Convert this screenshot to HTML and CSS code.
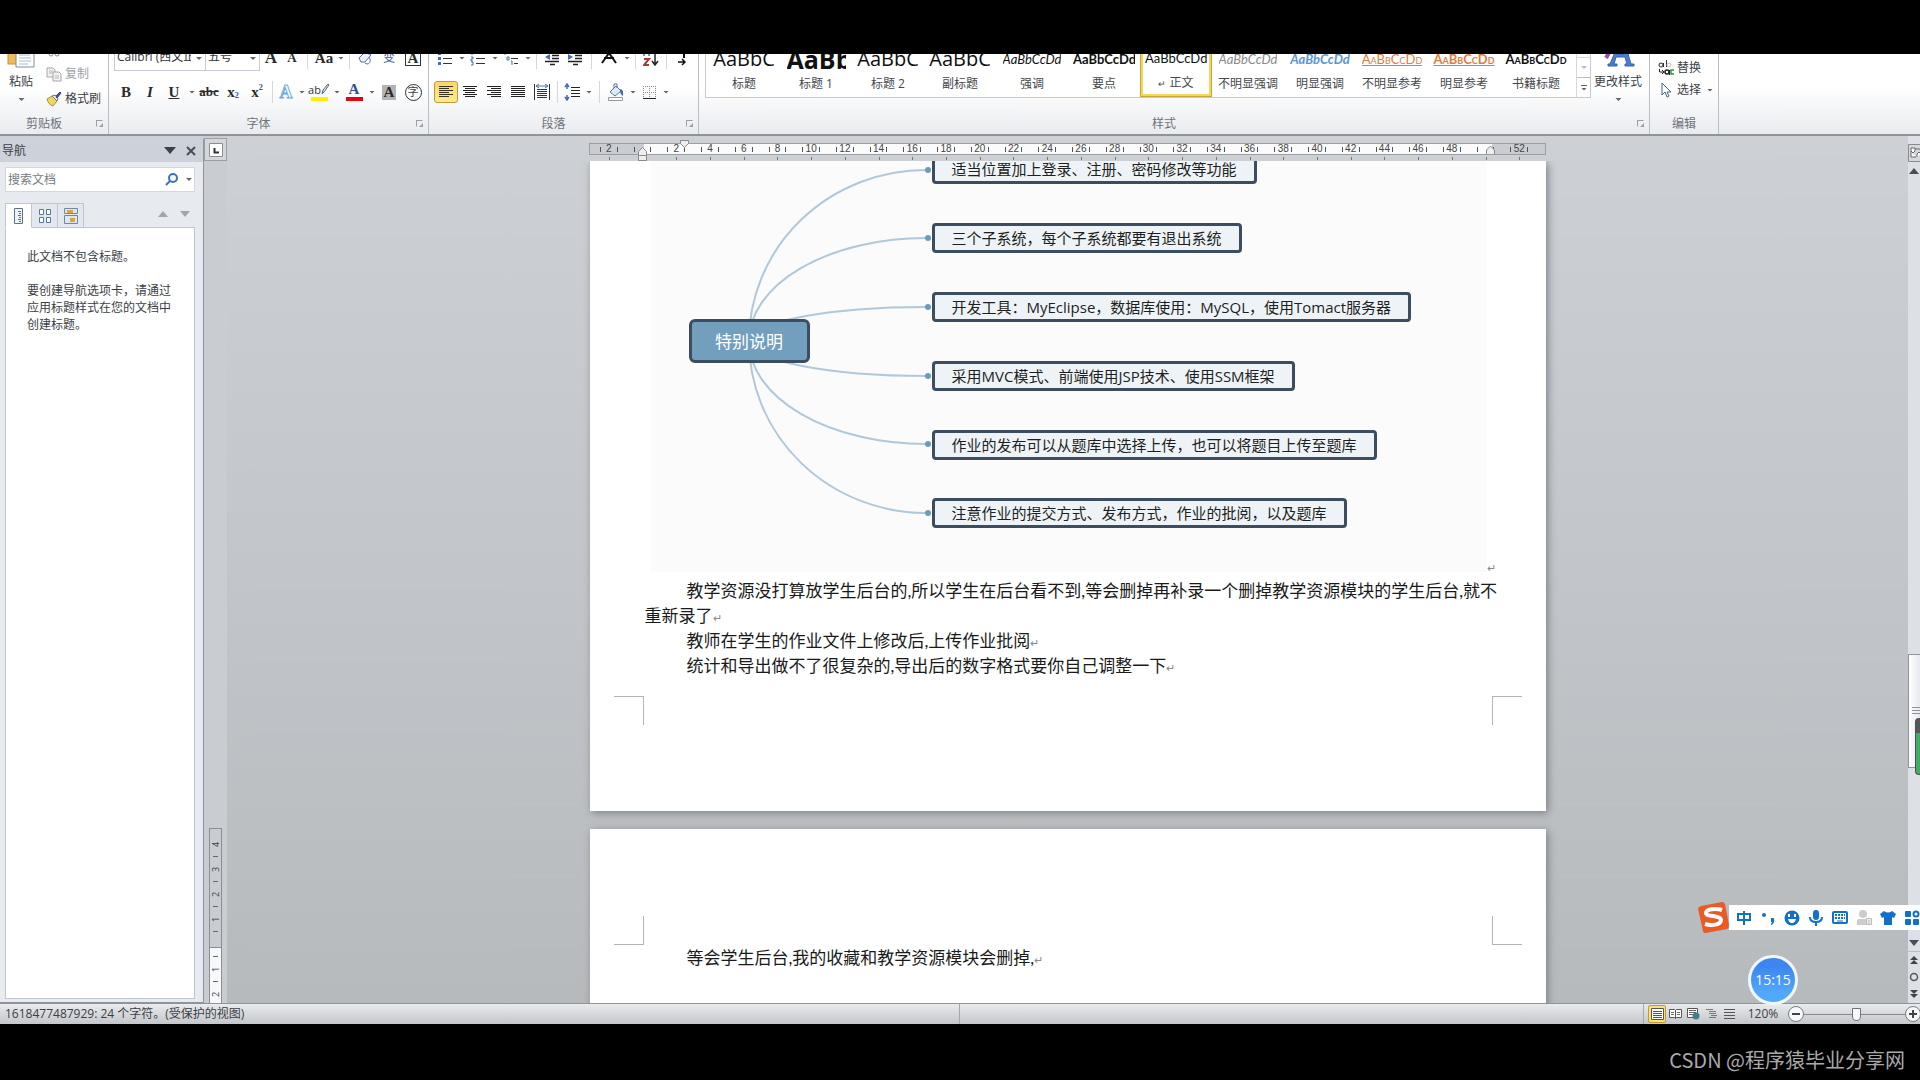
FILE: index.html
```html
<!DOCTYPE html>
<html lang="zh-CN">
<head>
    <meta charset="UTF-8">
    <title>文档</title>
    <link rel="stylesheet" href="styles.css">
</head>
<body>
    <div class="window">
        <header class="ribbon">
            <section class="group group-clipboard">
                <div class="group-body">
                    <button class="big-button">
                        <svg width="28" height="32" viewBox="0 0 28 32"><rect x="1" y="2" width="19" height="26" fill="#f0b95a" stroke="#c98f35"/><path d="M9 9h11l7 7v15H9z" fill="#fff" stroke="#7d8ba3"/><path d="M12 16h11M12 19h11M12 22h12M12 25h12M12 28h9" stroke="#a9bcd6"/></svg>
                        <span>粘贴</span>
                        <i class="caret"></i>
                    </button>
                    <div class="stack">
                        <button class="row-button" aria-label="剪切"><svg width="16" height="16" viewBox="0 0 16 16"><path d="M4 2l6 10M12 2L6 12" stroke="#888" fill="none"/><circle cx="5" cy="13" r="2" fill="none" stroke="#888"/><circle cx="11" cy="13" r="2" fill="none" stroke="#888"/></svg></button>
                        <button class="row-button muted"><svg width="16" height="16" viewBox="0 0 16 16"><path d="M1 2h6l2 2v7H1z" fill="#f3f3f3" stroke="#a5a5a5"/><path d="M7 6h6l2 2v7H7z" fill="#f3f3f3" stroke="#a5a5a5"/><path d="M3 5h4M3 7h3M9 10h4M9 12h4" stroke="#b5b5b5"/></svg><span>复制</span></button>
                        <button class="row-button"><svg width="16" height="16" viewBox="0 0 16 16"><path d="M1 8l5-3 5 5-4 5c-3-1-5-3-6-7z" fill="#efd65f" stroke="#a8923a"/><path d="M6 5l3-1 3 3-1 3z" fill="#e8e8f4" stroke="#777"/><path d="M10 5l4-4 1 1-4 5z" fill="#4a56a8" stroke="#34408c"/></svg><span>格式刷</span></button>
                    </div>
                </div>
                <div class="group-label">剪贴板<button class="launcher" aria-label="剪贴板选项"></button></div>
            </section>

            <section class="group group-font">
                <div class="group-body tool-rows">
                    <div class="tools">
                        <span class="combo combo-font"><select aria-label="字体"><option>Calibri (西文正文)</option></select><i class="caret"></i></span>
                        <span class="combo combo-size"><select aria-label="字号"><option>五号</option></select><i class="caret"></i></span>
                        <button class="tool mid serif grow">A</button>
                        <button class="tool narrow serif">A</button>
                        <i class="sep wide"></i>
                        <button class="tool mid serif">Aa</button><i class="caret"></i>
                        <i class="sep"></i>
                        <button class="tool"><svg width="18" height="18" viewBox="0 0 18 18"><path d="M3 9l6-6 6 3-6 7H5z" fill="#eef" stroke="#5a6eb0"/><path d="M9 14c4 3 7-2 4-6" fill="none" stroke="#5a6eb0"/></svg></button>
                        <button class="tool blue">变</button>
                        <button class="tool serif"><span class="boxed">A</span></button>
                    </div>
                    <div class="tools">
                        <button class="tool serif">B</button>
                        <button class="tool serif italic">I</button>
                        <button class="tool serif under">U</button><i class="caret"></i>
                        <button class="tool serif strike">abc</button>
                        <button class="tool serif">x<sub>2</sub></button>
                        <button class="tool serif">x<sup>2</sup></button>
                        <i class="sep"></i>
                        <button class="tool narrow serif glow">A</button><i class="caret"></i>
                        <button class="tool"><span class="swatch yellow">ab<svg width="9" height="12" viewBox="0 0 9 12"><path d="M1 11l1-4 5-6 1 1-5 7z" fill="#dfe8f5" stroke="#567"/></svg></span></button><i class="caret"></i>
                        <button class="tool serif"><span class="swatch red">A</span></button><i class="caret"></i>
                        <button class="tool serif"><span class="shaded">A</span></button>
                        <button class="tool"><span class="ring">字</span></button>
                    </div>
                </div>
                <div class="group-label">字体<button class="launcher" aria-label="字体选项"></button></div>
            </section>

            <section class="group group-paragraph">
                <div class="group-body tool-rows">
                    <div class="tools">
                        <button class="tool mid"><svg width="16" height="16" viewBox="0 0 16 16"><path d="M1 2h3v3H1zM1 7h3v3H1zM1 12h3v3H1z" fill="#4a6cb3"/><path d="M6 3.500h9M6 8.500h9M6 13.500h9" stroke="#333"/></svg></button><i class="caret"></i>
                        <button class="tool mid"><svg width="16" height="16" viewBox="0 0 16 16"><path d="M2 1v4M1 7h2v2H1v2h2M1 12h2v3H1" fill="none" stroke="#4a6cb3"/><path d="M6 3.500h9M6 8.500h9M6 13.500h9" stroke="#333"/></svg></button><i class="caret"></i>
                        <button class="tool mid"><svg width="16" height="16" viewBox="0 0 16 16"><path d="M1 2h2v2H1zM4 7h2v3H4zM8 11h1v4" fill="none" stroke="#4a6cb3"/><path d="M5 3.500h7M8 8.500h7M11 13.500h4" stroke="#333"/></svg></button><i class="caret"></i>
                        <i class="sep"></i>
                        <button class="tool"><svg width="16" height="16" viewBox="0 0 16 16"><path d="M1 2.500h14M8 5.500h7M8 8.500h7M1 11.500h14M6 14.500h5" stroke="#222" stroke-width="1.500"/><path d="M6 4v6L1 7z" fill="#4a6cb3"/></svg></button>
                        <button class="tool mid"><svg width="16" height="16" viewBox="0 0 16 16"><path d="M1 2.500h14M8 5.500h7M8 8.500h7M1 11.500h14M6 14.500h5" stroke="#222" stroke-width="1.500"/><path d="M1 4v6l5-3z" fill="#4a6cb3"/></svg></button>
                        <i class="sep wide"></i>
                        <button class="tool"><svg width="18" height="16" viewBox="0 0 18 16"><path d="M9 3l7 10M9 3L2 13M4 8h10" fill="none" stroke="#111" stroke-width="2"/></svg></button><i class="caret"></i>
                        <i class="sep"></i>
                        <button class="tool"><svg width="16" height="18" viewBox="0 0 16 18"><path d="M1 7V1h5v6M1 4h5" fill="none" stroke="#4a6cb3" stroke-width="1.500"/><path d="M1 10h5l-5 6h5" fill="none" stroke="#a23b3b" stroke-width="2"/><path d="M12 1v14M9 12l3 4 3-4" fill="none" stroke="#222" stroke-width="1.500"/></svg></button>
                        <i class="sep"></i>
                        <button class="tool"><svg width="14" height="18" viewBox="0 0 14 18"><path d="M5 2h6M9 2v7" stroke="#111" stroke-width="2"/><path d="M3 13h6M7 10l3 3-3 3" fill="none" stroke="#111" stroke-width="1.500"/></svg></button>
                    </div>
                    <div class="tools">
                        <button class="tool pressed"><svg width="16" height="14" viewBox="0 0 16 14"><path d="M1 1.500h14M1 3.500h10M1 5.500h14M1 7.500h10M1 9.500h14M1 11.500h10" stroke="#3a3420"/></svg></button>
                        <button class="tool"><svg width="16" height="14" viewBox="0 0 16 14"><path d="M1 1.500h14M3 3.500h10M1 5.500h14M3 7.500h10M1 9.500h14M3 11.500h10" stroke="#222"/></svg></button>
                        <button class="tool"><svg width="16" height="14" viewBox="0 0 16 14"><path d="M1 1.500h14M5 3.500h10M1 5.500h14M5 7.500h10M1 9.500h14M5 11.500h10" stroke="#222"/></svg></button>
                        <button class="tool"><svg width="16" height="14" viewBox="0 0 16 14"><path d="M1 1.500h14M1 3.500h14M1 5.500h14M1 7.500h14M1 9.500h14M1 11.500h14" stroke="#222"/></svg></button>
                        <button class="tool"><svg width="16" height="18" viewBox="0 0 16 18"><path d="M.5 1v16M15.500 1v16M3 6.500h10M3 8.500h10M3 10.500h10M3 12.500h10M3 14.500h10" stroke="#333"/><path d="M2 3h12M5 1L2 3l3 2M11 1l3 2-3 2" fill="none" stroke="#4a6cb3"/></svg></button>
                        <i class="sep"></i>
                        <button class="tool mid"><svg width="16" height="18" viewBox="0 0 16 18"><path d="M3 1v5M3 12v5M1 4l2-3 2 3M1 14l2 3 2-3" fill="none" stroke="#4a6cb3" stroke-width="1.500"/><path d="M7 4.500h9M7 7.500h9M7 10.500h9M7 13.500h9" stroke="#222"/></svg></button><i class="caret"></i>
                        <i class="sep wide"></i>
                        <button class="tool mid"><svg width="18" height="18" viewBox="0 0 18 18"><path d="M3 9l6-6 5 5-6 5z" fill="#dfe9f6" stroke="#5676a8"/><path d="M7 5V1h3v4" fill="none" stroke="#5676a8"/><path d="M13 6c4 1 3 4 3 7-2-1-3-3-3-7z" fill="#3d68b0"/><path d="M1.500 14.500h14v3h-14z" fill="#fff" stroke="#999"/></svg></button><i class="caret"></i>
                        <button class="tool mid"><svg width="15" height="15" viewBox="0 0 15 15"><path d="M1.500 1v12M7.500 1v12M13.500 1v12M1 1.500h13M1 7.500h13" stroke="#888" stroke-dasharray="1 1"/><path d="M1 13.500h13" stroke="#222"/></svg></button><i class="caret"></i>
                    </div>
                </div>
                <div class="group-label">段落<button class="launcher" aria-label="段落选项"></button></div>
            </section>

            <section class="group group-styles">
                <div class="group-body">
                    <div class="gallery">
                        <button class="style"><span class="sample large">AaBbC</span><span>标题</span></button>
                        <button class="style"><span class="sample heavy">AaBb</span><span>标题 1</span></button>
                        <button class="style"><span class="sample large">AaBbC</span><span>标题 2</span></button>
                        <button class="style"><span class="sample large">AaBbC</span><span>副标题</span></button>
                        <button class="style"><span class="sample italic">AaBbCcDd</span><span>强调</span></button>
                        <button class="style"><span class="sample bold">AaBbCcDd</span><span>要点</span></button>
                        <button class="style selected"><span class="sample">AaBbCcDd</span><span><small>↵</small> 正文</span></button>
                        <button class="style"><span class="sample italic gray">AaBbCcDd</span><span>不明显强调</span></button>
                        <button class="style"><span class="sample italic bold sky">AaBbCcDd</span><span>明显强调</span></button>
                        <button class="style"><span class="sample caps orange">AaBbCcDd</span><span>不明显参考</span></button>
                        <button class="style"><span class="sample caps bold orange">AaBbCcDd</span><span>明显参考</span></button>
                        <button class="style"><span class="sample caps bold">AaBbCcDd</span><span>书籍标题</span></button>
                        <div class="gallery-scroll">
                            <button aria-label="下一行"><i class="caret pale"></i></button>
                            <button class="more" aria-label="其他"><i class="caret"></i></button>
                        </div>
                    </div>
                    <button class="big-button">
                        <svg width="34" height="32" viewBox="0 0 34 32"><path d="M5 22L14 6" stroke="#9b4fb5" stroke-width="4"/><path d="M9 28l10-24h4l7 24h3v2h-9v-2h2l-2-7h-9l-2 7h3v2H7v-2zM16 18h7l-3-9z" fill="#4a7fd0" stroke="#3562ab"/></svg>
                        <span>更改样式</span>
                        <i class="caret"></i>
                    </button>
                </div>
                <div class="group-label">样式<button class="launcher" aria-label="样式选项"></button></div>
            </section>

            <section class="group group-edit">
                <div class="group-body stack">
                    <button class="row-button"><svg width="16" height="16" viewBox="0 0 16 16"><circle cx="3" cy="5" r="2" fill="none" stroke="#222"/><path d="M5.500 3v4M8.500 0v7" stroke="#333"/><circle cx="11" cy="5" r="2" fill="none" stroke="#bbb"/><path d="M1.500 9v3h4M4 10l2 2-2 2" fill="none" stroke="#222"/><circle cx="9" cy="12" r="2" fill="none" stroke="#222" stroke-width="1.500"/><path d="M11.500 10v5" stroke="#222"/><path d="M16 10h-3v4h3" fill="none" stroke="#2a9a3a" stroke-width="1.500"/></svg><span>替换</span></button>
                    <button class="row-button"><svg width="16" height="16" viewBox="0 0 16 16"><path d="M4 1v12l3-3 2 5 2-1-2-4h4z" fill="#fff" stroke="#4a6285"/></svg><span>选择</span><i class="caret"></i></button>
                </div>
                <div class="group-label">编辑</div>
            </section>
        </header>

        <main class="workspace">
            <aside class="nav">
                <div class="nav-header">
                    <span>导航</span>
                    <button aria-label="窗格选项"><svg width="12" height="7" viewBox="0 0 12 7"><path d="M0 0h12L6 7z" fill="#3c4048"/></svg></button>
                    <button aria-label="关闭"><svg width="10" height="10" viewBox="0 0 10 10"><path d="M1 1l8 8M9 1L1 9" stroke="#4a4e56" stroke-width="2"/></svg></button>
                </div>
                <div class="search">
                    <input type="text" placeholder="搜索文档" aria-label="搜索文档">
                    <svg width="13" height="13" viewBox="0 0 13 13"><circle cx="8" cy="5" r="4" fill="#f2f8ff" stroke="#3f73b5" stroke-width="2"/><path d="M5 8l-4 4" stroke="#3f73b5" stroke-width="2"/></svg>
                    <i class="caret"></i>
                </div>
                <div class="nav-tabs">
                    <button class="active" aria-label="标题"><svg width="10" height="16" viewBox="0 0 10 16"><path d="M.5.500h8v15h-8z" fill="#eef3f8" stroke="#5f7388"/><path d="M4 3.500h3M5 5.500h2M4 7.500h3M5 9.500h2M4 11.500h3M5 13.500h2" stroke="#5f7388"/></svg></button>
                    <button aria-label="页面"><svg width="14" height="16" viewBox="0 0 14 16"><path d="M1.500 1.500h4v5h-4zM8.500 1.500h4v5h-4zM1.500 9.500h4v5h-4zM8.500 9.500h4v5h-4z" fill="#fff" stroke="#55779c"/></svg></button>
                    <button aria-label="结果"><svg width="14" height="16" viewBox="0 0 14 16"><path d="M.5.500h13v5H.5zM.5 7.500h13v8H.5z" fill="#dce7f3" stroke="#6c88a8"/><path d="M3 2h6v3H3zM6 10h5v4H6z" fill="#dfa533"/></svg></button>
                    <span class="nav-arrows"><i class="tri up"></i><i class="tri"></i></span>
                </div>
                <div class="nav-content">
                    <p>此文档不包含标题。</p>
                    <p>要创建导航选项卡，请通过应用标题样式在您的文档中创建标题。</p>
                </div>
            </aside>

            <div class="side-ruler">
                <button class="tab-stop" aria-label="制表符"><svg width="14" height="14" viewBox="0 0 14 14"><path d="M.5.500h13v13H.5z" fill="#fff" stroke="#8a8d92"/><path d="M5.500 5v4.500H10" fill="none" stroke="#333" stroke-width="2"/></svg></button>
                <div class="v-ruler">
                    <span>4</span><span>3</span><span>2</span><span>1</span><span></span><span>1</span><span>2</span>
                </div>
            </div>

            <div class="document">
                <div class="ruler-row">
                    <div class="h-ruler">
                        <span>2</span><span class="blank"></span><span>2</span><span>4</span><span>6</span><span>8</span><span>10</span><span>12</span><span>14</span><span>16</span><span>18</span><span>20</span><span>22</span><span>24</span><span>26</span><span>28</span><span>30</span><span>32</span><span>34</span><span>36</span><span>38</span><span>40</span><span>42</span><span>44</span><span>46</span><span>48</span><span class="blank"></span><span>52</span>
                        <svg class="marker first-line" width="10" height="9" viewBox="0 0 10 9"><path d="M.5.500h8v3l-4 4-4-4z" fill="#eee" stroke="#8a8a8a"/></svg>
                        <svg class="marker left-indent" width="10" height="14" viewBox="0 0 10 14"><path d="M.5 8.500v-4l4-4 4 4v4zM.5 8.500h8v5h-8z" fill="#eee" stroke="#8a8a8a"/></svg>
                        <svg class="marker right-indent" width="10" height="10" viewBox="0 0 10 10"><path d="M.5 9v-4l4-4 4 4v4" fill="#eee" stroke="#8a8a8a"/></svg>
                    </div>
                </div>
                <div class="pages">
                    <article class="page page-one">
                        <div class="mindmap">
                            <svg class="links" width="836" height="408" viewBox="650 161 836 408">
                                <g fill="none" stroke="#b0c8d8" stroke-width="2">
                                    <path d="M748 341A177 171 0 0 1 925 170"/>
                                    <path d="M748 341A177 103 0 0 1 925 238"/>
                                    <path d="M748 341A177 34 0 0 1 925 307"/>
                                    <path d="M748 341A177 35 0 0 0 925 376"/>
                                    <path d="M748 341A177 103 0 0 0 925 444"/>
                                    <path d="M748 341A177 172 0 0 0 925 513"/>
                                </g>
                                <g fill="#6c9cbb">
                                    <circle cx="927" cy="170" r="3"/><circle cx="927" cy="238" r="3"/><circle cx="927" cy="307" r="3"/>
                                    <circle cx="927" cy="376" r="3"/><circle cx="927" cy="444" r="3"/><circle cx="927" cy="513" r="3"/>
                                </g>
                            </svg>
                            <div class="node root">特别说明</div>
                            <div class="node n1">适当位置加上登录、注册、密码修改等功能</div>
                            <div class="node n2">三个子系统，每个子系统都要有退出系统</div>
                            <div class="node n3">开发工具：MyEclipse，数据库使用：MySQL，使用Tomact服务器</div>
                            <div class="node n4">采用MVC模式、前端使用JSP技术、使用SSM框架</div>
                            <div class="node n5">作业的发布可以从题库中选择上传，也可以将题目上传至题库</div>
                            <div class="node n6">注意作业的提交方式、发布方式，作业的批阅，以及题库</div>
                            <span class="mark image-mark">↵</span>
                        </div>
                        <div class="text">
                            <p>教学资源没打算放学生后台的,所以学生在后台看不到,等会删掉再补录一个删掉教学资源模块的学生后台,就不<br>重新录了<span class="mark">↵</span></p>
                            <p>教师在学生的作业文件上修改后,上传作业批阅<span class="mark">↵</span></p>
                            <p>统计和导出做不了很复杂的,导出后的数字格式要你自己调整一下<span class="mark">↵</span></p>
                        </div>
                        <div class="corners bottom"><i></i><i></i></div>
                    </article>
                    <article class="page page-two">
                        <div class="corners top"><i></i><i></i></div>
                        <div class="text">
                            <p>等会学生后台,我的收藏和教学资源模块会删掉,<span class="mark">↵</span></p>
                        </div>
                    </article>
                </div>
            </div>

            <div class="scrollbar">
                <svg class="ruler-toggle" width="13" height="18" viewBox="0 0 13 18"><path d="M14 .5H.5v17H14" fill="#d5d8dc" stroke="#888c92"/><path d="M3 4h4v3L5 9 3 7zM7 5h6M9 13v-3l2-2 2 2M3 7v6h5" fill="#fff" stroke="#666"/></svg>
                <i class="tri up dark"></i>
                <div class="thumb"><i class="grip"></i></div>
                <i class="tri dark"></i>
                <div class="browse">
                    <svg width="10" height="10" viewBox="0 0 10 10"><path d="M1 5l4-4 4 4zM1 9l4-4 4 4z" fill="#444"/></svg>
                    <svg width="10" height="10" viewBox="0 0 10 10"><circle cx="5" cy="5" r="3.500" fill="none" stroke="#555" stroke-width="1.500"/></svg>
                    <svg width="10" height="10" viewBox="0 0 10 10"><path d="M1 1l4 4 4-4zM1 5l4 4 4-4z" fill="#444"/></svg>
                </div>
                <div class="meter"></div>
            </div>
        </main>

        <footer class="status">
            <span class="status-left">1618477487929: 24 个字符。(受保护的视图)</span>
            <div class="status-right">
                <button class="view active" aria-label="页面视图"><svg width="13" height="12" viewBox="0 0 13 12"><path d="M.5.500h12v11H.5z" fill="#fff" stroke="#555"/><path d="M2 3.500h9M2 5.500h9M2 7.500h9M2 9.500h9" stroke="#555"/></svg></button>
                <button class="view" aria-label="阅读版式"><svg width="13" height="12" viewBox="0 0 13 12"><path d="M.5 1.500h5l1 1 1-1h5v8h-5l-1 1-1-1h-5zM6.500 2v9" fill="#fff" stroke="#555"/><path d="M2 4.500h3M2 6.500h3M8 4.500h3M8 6.500h3" stroke="#666"/></svg></button>
                <button class="view" aria-label="Web 版式"><svg width="13" height="12" viewBox="0 0 13 12"><path d="M.5.500h10v9H.5z" fill="#fff" stroke="#555"/><path d="M2 2.500h7M2 4.500h7M2 6.500h4" stroke="#666"/><circle cx="9" cy="8" r="3.500" fill="#447d8f"/></svg></button>
                <button class="view" aria-label="大纲"><svg width="13" height="12" viewBox="0 0 13 12"><path d="M1 1.500h7M4 3.500h7M4 5.500h7M6 7.500h6M4 9.500h7" stroke="#777"/></svg></button>
                <button class="view" aria-label="草稿"><svg width="13" height="12" viewBox="0 0 13 12"><path d="M1 1.500h11M1 4.500h11M1 7.500h11M1 10.500h11" stroke="#555"/></svg></button>
                <button class="zoom-label">120%</button>
                <button class="zoom-button" aria-label="缩小"><svg width="16" height="16" viewBox="0 0 16 16"><circle cx="8" cy="8" r="7.500" fill="#f7f8f9" stroke="#777b80"/><path d="M4 8h8" stroke="#444" stroke-width="2"/></svg></button>
                <input class="zoom-slider" type="range" min="0" max="100" value="52" aria-label="显示比例">
                <button class="zoom-button" aria-label="放大"><svg width="16" height="16" viewBox="0 0 16 16"><circle cx="8" cy="8" r="7.500" fill="#f7f8f9" stroke="#777b80"/><path d="M4 8h8M8 4v8" stroke="#444" stroke-width="2"/></svg></button>
            </div>
        </footer>
    </div>

    <div class="credit">CSDN @程序猿毕业分享网</div>

    <!-- 输入法工具条 -->
    <div class="ime">
        <svg class="ime-logo" width="34" height="34" viewBox="0 0 34 34"><path d="M4 5L25 1q2 0 3 2l4 21q0 3-2 4L9 32q-3 0-3-2L1 8q0-2 3-3z" fill="#ea5a25"/><path d="M25 9C19 7 9 8 9 12c0 4 15 2 15 7 0 5-10 6-16 4" fill="none" stroke="#fff" stroke-width="4"/></svg>
        <svg width="16" height="16" viewBox="0 0 16 16"><path d="M2 4h12v6H2zM8 1v14" fill="none" stroke="#1270c8" stroke-width="2"/></svg>
        <svg width="16" height="16" viewBox="0 0 16 16"><circle cx="4" cy="5" r="2" fill="#1270c8"/><path d="M11 8h3v3q0 3-3 4v-1l1-2h-1z" fill="#1270c8"/></svg>
        <svg width="16" height="16" viewBox="0 0 16 16"><circle cx="8" cy="8" r="7.500" fill="#1270c8"/><path d="M5 4v3M11 4v3" stroke="#fff" stroke-width="2"/><path d="M4 9h8q-1 4-4 4T4 9z" fill="#fff"/></svg>
        <svg width="16" height="16" viewBox="0 0 16 16"><rect x="5" y="0" width="6" height="10" rx="3" fill="#1270c8"/><path d="M2 7q0 5 6 5t6-5M8 12v4" fill="none" stroke="#1270c8" stroke-width="2"/></svg>
        <svg width="16" height="16" viewBox="0 0 16 16"><rect x="1" y="2" width="14" height="11" rx="1" fill="#fff" stroke="#1270c8" stroke-width="2"/><path d="M3 5h10M3 8h10" stroke="#1270c8" stroke-width="2" stroke-dasharray="2 1"/><path d="M5 11h6" stroke="#1270c8"/></svg>
        <svg width="16" height="16" viewBox="0 0 16 16"><circle cx="7" cy="4" r="4" fill="#ccc"/><path d="M1 15V11q0-2 2-2h8v6z" fill="#ccc"/><path d="M10.500 8.500h5v6h-5zM13 10v4" fill="#eee" stroke="#bbb"/></svg>
        <svg width="16" height="16" viewBox="0 0 16 16"><path d="M4 1q4 3 8 0l4 3-2 4-2-1v8H4V7L2 8 0 4z" fill="#1270c8"/></svg>
        <svg width="16" height="16" viewBox="0 0 16 16"><rect x="1" y="1" width="6" height="6" rx="1" fill="#1270c8"/><circle cx="12" cy="4" r="2.500" fill="none" stroke="#1270c8" stroke-width="2"/><rect x="1" y="9" width="6" height="6" rx="1" fill="#1270c8"/><rect x="9" y="9" width="6" height="6" rx="1" fill="#1270c8"/></svg>
    </div>
    <div class="clock">15:15</div>
</body>
</html>
```
FILE: styles.css
```css
* {
    box-sizing: border-box;
}
body {
    margin: 0;
    background: #000;
    font-family: "Open Sans", "Noto Sans CJK SC", sans-serif;
    font-size: 12px;
    line-height: 16px;
    color: #3b3e44;
    overflow: hidden;
}
button {
    margin: 0;
    padding: 0;
    border: none;
    background: none;
    font: inherit;
    color: inherit;
}
svg {
    display: block;
    flex: none;
}
.window {
    display: flex;
    flex-direction: column;
    height: 100vh;
    padding: 54px 0 56px;
}

/* 功能区 */
.ribbon {
    display: flex;
    flex: none;
    height: 82px;
    overflow: hidden;
    background: linear-gradient(#fff 40%, #e9ebef);
    border-bottom: 2px solid #8f949b;
}
.group {
    display: flex;
    flex-direction: column;
    justify-content: flex-end;
    border-right: 1px solid #b9bdc4;
}
.group-clipboard { width: 109px; }
.group-font { width: 320px; }
.group-paragraph { width: 270px; }
.group-styles { width: 951px; }
.group-edit { width: 69px; }
.group-body {
    display: flex;
    align-items: flex-end;
}
.group-label {
    position: relative;
    flex: none;
    height: 23px;
    padding-right: 20px;
    text-align: center;
    line-height: 26px;
    color: #6d727b;
}
.group-edit .group-label {
    padding-right: 0;
}
.launcher {
    position: absolute;
    right: 5px;
    top: 9px;
    width: 7px;
    height: 7px;
    border: 1px solid #9a9ea5;
    border-right-color: transparent;
    border-bottom-color: transparent;
}
.launcher::after {
    content: "";
    position: absolute;
    right: -1px;
    bottom: -1px;
    width: 4px;
    height: 4px;
    background: #9a9ea5;
    clip-path: polygon(100% 0, 100% 100%, 0 100%);
}
.caret {
    flex: none;
    width: 11px;
    height: 3px;
    background: #62666d;
    clip-path: polygon(3px 0, 9px 0, 6px 3px);
}
.caret.pale {
    background: #b5b8bd;
}
.big-button {
    display: flex;
    flex-direction: column;
    align-items: center;
    width: 42px;
    padding-bottom: 10px;
    flex: none;
}
.big-button svg {
    margin-bottom: 6px;
}
.big-button .caret {
    margin-top: 8px;
}
.group-styles .big-button {
    width: 54px;
}
.stack {
    display: flex;
    flex-direction: column;
    align-items: flex-start;
}
.row-button {
    display: flex;
    align-items: center;
    gap: 3px;
    height: 25px;
    padding-left: 4px;
}
.group-edit .row-button {
    height: 22px;
    padding-left: 8px;
}
.group-edit .stack {
    padding-bottom: 10px;
}
.muted {
    color: #9c9fa4;
}

.tool-rows {
    flex-direction: column;
    align-items: flex-start;
    gap: 8px;
    padding: 0 0 6px 5px;
}
.tools {
    display: flex;
    align-items: center;
    height: 26px;
}
.tool {
    display: flex;
    align-items: center;
    justify-content: center;
    width: 24px;
    height: 22px;
    flex: none;
}
.tool.mid { width: 22px; }
.tool.narrow { width: 20px; }
.tool sub, .tool sup {
    font-size: 8px;
    line-height: 8px;
    color: #2d4f9b;
}
.tool sub { margin-top: 8px; }
.tool sup { margin-bottom: 8px; }
.sep {
    width: 1px;
    height: 22px;
    margin: 0 3px;
    background: #d4d7db;
}
.sep.wide {
    margin: 0 5px;
}
.serif {
    font-family: "Liberation Serif", serif;
    font-size: 15px;
    font-weight: bold;
    color: #2b2b2b;
}
.serif.narrow { font-size: 13px; }
.serif.grow { font-size: 17px; }
.italic { font-style: italic; }
.under { text-decoration: underline; }
.serif.strike {
    font-size: 13px;
    text-decoration: line-through;
}
.blue { color: #3a57b0; }
.boxed {
    border: 1px solid #333;
    padding: 0 2px;
    line-height: 14px;
}
.serif.glow {
    font-size: 18px;
    color: #fff;
    -webkit-text-stroke: 1px #6aaedb;
}
.swatch {
    display: flex;
    width: 17px;
    height: 18px;
    justify-content: center;
    line-height: 13px;
    border-bottom: 4px solid;
}
.swatch.yellow {
    font-size: 11px;
    color: #333;
    border-color: #ffee00;
}
.swatch.red {
    color: #2f4f96;
    border-color: #e60012;
}
.shaded {
    background: #b4b4b4;
    padding: 0 2px;
    line-height: 15px;
}
.ring {
    border: 1px solid #333;
    border-radius: 50%;
    width: 17px;
    height: 17px;
    font-size: 11px;
    line-height: 14px;
}
.pressed {
    background: linear-gradient(#fbd668, #fdea8e);
    border: 1px solid #c39a35;
    border-radius: 3px;
}
.combo {
    position: relative;
    height: 26px;
    border: 1px solid #c8cbd0;
    background: #fff;
}
.combo select {
    appearance: none;
    display: block;
    width: 100%;
    height: 22px;
    padding: 0 14px 0 2px;
    border: none;
    background: none;
    font: inherit;
    color: #333;
}
.combo .caret {
    position: absolute;
    right: 1px;
    top: 11px;
}
.combo-font { width: 92px; }
.combo-size { width: 54px; border-left: none; }

/* 样式库 */
.gallery {
    display: flex;
    align-items: flex-end;
    margin: 0 0 13px 6px;
    padding-left: 2px;
    width: 886px;
    height: 60px;
    background: #fff;
    border: 1px solid #c8cbd0;
}
.style {
    display: flex;
    flex-direction: column;
    justify-content: flex-end;
    align-items: center;
    width: 72px;
    height: 56px;
    padding-bottom: 5px;
    overflow: hidden;
    white-space: nowrap;
    flex: none;
    color: #44474c;
}
.style.selected {
    border: 3px solid #f3d65c;
    outline: 1px solid #c9a43b;
    outline-offset: -1px;
    padding-bottom: 2px;
}
.style small {
    font-size: 9px;
}
.sample {
    max-width: 62px;
    overflow: hidden;
    font-family: Lato, sans-serif;
    font-size: 13px;
    line-height: 22px;
    margin-bottom: 6px;
    color: #111;
    flex: none;
}
.sample.large {
    font-family: "Open Sans", sans-serif;
    font-size: 20px;
}
.sample.heavy {
    font-family: "Open Sans", sans-serif;
    font-size: 25px;
    font-weight: bold;
    max-width: 59px;
}
.bold { font-weight: bold; }
.sample.gray { color: #8a8a8a; }
.sample.sky { color: #5b95d2; }
.sample.orange {
    color: #e07b3c;
    text-decoration: underline;
}
.sample.caps { font-variant: small-caps; }
.gallery-scroll {
    display: flex;
    flex-direction: column;
    width: 14px;
    height: 58px;
    margin-left: auto;
    border-left: 1px solid #d5d8dc;
}
.gallery-scroll button {
    display: flex;
    align-items: center;
    justify-content: center;
    height: 20px;
    margin-top: 18px;
    border-top: 1px solid #d5d8dc;
}
.gallery-scroll .more {
    flex: 1;
    flex-direction: column;
    gap: 2px;
    margin-top: 0;
    border-color: #b9bdc4;
}
.more::before {
    content: "";
    width: 6px;
    height: 1px;
    background: #62666d;
}

/* 工作区 */
.workspace {
    display: flex;
    flex: 1;
    min-height: 0;
    background: linear-gradient(#cdd0d5, #b7babd);
}
.nav {
    display: flex;
    flex-direction: column;
    width: 204px;
    margin-top: 3px;
    background: #e7ebf0;
    border-right: 1px solid #8f949b;
    border-bottom: 1px solid #8f949b;
}
.nav-header {
    display: flex;
    align-items: center;
    gap: 10px;
    height: 23px;
    padding: 0 7px 0 2px;
    background: #cdd2da;
    flex: none;
}
.nav-header span {
    flex: 1;
}
.search {
    display: flex;
    align-items: center;
    height: 25px;
    margin: 5px 8px 11px 5px;
    background: #fff;
    border: 1px solid #d3d8df;
    flex: none;
}
.search input {
    flex: 1;
    min-width: 0;
    border: none;
    padding: 0 2px;
    background: none;
    font: inherit;
}
.search input::placeholder {
    color: #777b82;
}
.search .caret {
    margin-left: 5px;
}
.nav-tabs {
    display: flex;
    height: 25px;
    margin-left: 5px;
    flex: none;
}
.nav-tabs button {
    display: flex;
    align-items: center;
    justify-content: center;
    width: 27px;
    height: 25px;
    margin-right: -1px;
    border: 1px solid #c0c6cf;
    background: #e3e8ef;
}
.nav-tabs button.active {
    z-index: 1;
    background: #fff;
    border-bottom-color: #fff;
}
.nav-arrows {
    display: flex;
    gap: 12px;
    margin: 8px 13px 0 auto;
}
.tri {
    width: 10px;
    height: 6px;
    background: #a2a6ac;
    clip-path: polygon(0 0, 100% 0, 50% 100%);
    flex: none;
}
.tri.up {
    clip-path: polygon(50% 0, 100% 100%, 0 100%);
}
.tri.dark {
    background: #4a4d52;
}
.nav-content {
    flex: 1;
    margin: -1px 8px 3px 5px;
    padding: 20px 20px 0 21px;
    background: #fff;
    border: 1px solid #c0c6cf;
    line-height: 17px;
}
.nav-content p {
    margin: 0 0 17px;
}
.side-ruler {
    display: flex;
    flex-direction: column;
    justify-content: space-between;
    width: 23px;
    padding-top: 2px;
    background: #c9ccd1;
}
.tab-stop {
    display: flex;
    align-items: center;
    justify-content: center;
    height: 23px;
    border: 1px solid #9a9ea5;
    background: #d3d6da;
}
.v-ruler {
    display: flex;
    flex-direction: column;
    align-self: flex-start;
    width: 13px;
    height: 175px;
    margin-left: 5px;
    padding-top: 3px;
    overflow: hidden;
    border: 1px solid #8a8e95;
    border-bottom: none;
    background: linear-gradient(#c9ccd1 118px, #8a8e95 118px, #8a8e95 119px, #f6f8f9 119px);
}
.v-ruler span {
    position: relative;
    height: 25px;
    flex: none;
    writing-mode: vertical-rl;
    transform: rotate(180deg);
    text-align: center;
    font-size: 9px;
    line-height: 11px;
}
.v-ruler span::before {
    content: "";
    position: absolute;
    left: 3px;
    top: 0;
    width: 5px;
    height: 1px;
    background: #666;
}

/* 标尺与页面 */
.document {
    display: flex;
    flex-direction: column;
    align-items: center;
    flex: 1;
    min-width: 0;
}
.ruler-row {
    flex: none;
    height: 25px;
    padding-top: 7px;
}
.h-ruler {
    position: relative;
    display: flex;
    width: 957px;
    height: 12px;
    padding: 0 9px 0 2px;
    border: 1px solid #9a9ea5;
    background: linear-gradient(90deg, #c9ccd1 54px, #fbfbfb 54px, #fbfbfb 902px, #c9ccd1 902px);
}
.h-ruler span {
    position: relative;
    flex: 1;
    text-align: center;
    font-family: "Liberation Sans", sans-serif;
    font-size: 10px;
    line-height: 10px;
    color: #444;
}
.h-ruler span::before {
    content: "";
    position: absolute;
    left: 8px;
    right: 8px;
    top: 3px;
    height: 5px;
    border: solid #555;
    border-width: 0 1px;
}
.h-ruler span::after {
    content: "";
    position: absolute;
    left: 50%;
    top: 13px;
    width: 1px;
    height: 3px;
    background: #777;
}
.marker {
    position: absolute;
}
.first-line { left: 90px; top: -4px; }
.left-indent { left: 48px; top: 3px; }
.right-indent { left: 896px; top: 1px; }
.pages {
    flex: 1;
    min-height: 0;
    overflow: hidden;
    padding: 0 12px;
}
.page {
    width: 956px;
    background: #fff;
    box-shadow: 2px 2px 8px #7d8084;
    display: flow-root;
}
.page-one {
    height: 650px;
    margin-bottom: 18px;
}
.page-two {
    height: 650px;
}
.mindmap {
    position: relative;
    width: 836px;
    height: 411px;
    margin: 0 0 6px 61px;
    background: #fbfbfc;
}
.node {
    position: absolute;
    left: 281px;
    height: 30px;
    padding: 0 17px;
    border: 3px solid #3b4d5e;
    border-radius: 4px;
    background: #eef3f7;
    font-size: 15px;
    line-height: 24px;
    white-space: nowrap;
    color: #1d1f22;
}
.root {
    left: 38px;
    top: 158px;
    width: 121px;
    height: 44px;
    padding: 0;
    border-radius: 6px;
    background: #729fbe;
    color: #fff;
    font-size: 17px;
    line-height: 40px;
    text-align: center;
}
.n1 { top: -7px; }
.n2 { top: 62px; }
.n3 { top: 131px; }
.n4 { top: 200px; }
.n5 { top: 269px; }
.n6 { top: 337px; }
.mark {
    font-size: 11px;
    line-height: 1px;
    color: #85888c;
}
.image-mark {
    position: absolute;
    right: -9px;
    bottom: 4px;
}
.text {
    padding-left: 55px;
    font-family: Lato, "Noto Sans CJK SC", sans-serif;
    font-size: 17px;
    line-height: 25px;
    color: #1a1a1a;
    white-space: nowrap;
}
.text p {
    margin: 0;
    text-indent: 42px;
}
.corners {
    display: flex;
    justify-content: space-between;
    padding: 0 24px;
}
.corners i {
    width: 30px;
    height: 29px;
    border: 0 solid #b3b3b3;
    border-right-width: 1px;
}
.corners i + i {
    border-right-width: 0;
    border-left-width: 1px;
}
.corners.bottom {
    margin-top: 18px;
}
.corners.bottom i {
    border-top-width: 1px;
}
.corners.top {
    margin-top: 87px;
}
.corners.top i {
    border-bottom-width: 1px;
}

/* 滚动条 */
.scrollbar {
    position: relative;
    display: flex;
    flex-direction: column;
    align-items: center;
    width: 12px;
    padding-top: 8px;
    background: #dde1e7;
    flex: none;
    overflow: hidden;
}
.ruler-toggle {
    margin-bottom: 6px;
}
.thumb {
    display: flex;
    align-items: center;
    justify-content: flex-end;
    width: 12px;
    height: 114px;
    margin: 480px 0 auto;
    border: 1px solid #8f949b;
    border-right: none;
    background: linear-gradient(90deg, #fff, #e6e9ee);
}
.grip {
    width: 8px;
    height: 8px;
    background: repeating-linear-gradient(#8f949b 0 1px, transparent 1px 3px);
}
.browse {
    display: flex;
    flex-direction: column;
    align-items: center;
    gap: 7px;
    width: 100%;
    margin-top: 5px;
    padding: 3px 0 4px;
    border-top: 1px solid #b9bdc4;
}
.meter {
    position: absolute;
    right: 0;
    top: 582px;
    width: 5px;
    height: 57px;
    border: 1px solid #4c5052;
    border-right: none;
    border-radius: 4px 0 0 4px;
    background: linear-gradient(#55585a 14px, #3fae62 14px);
}

/* 状态栏 */
.status {
    display: flex;
    flex: none;
    height: 21px;
    border-top: 1px solid #8f949b;
    background: linear-gradient(#e9ebee, #c3c6ca);
    line-height: 20px;
}
.status-left {
    width: 50%;
    padding-left: 5px;
    border-right: 1px solid #a5a9af;
}
.status-right {
    display: flex;
    align-items: center;
    margin-left: auto;
    padding-left: 4px;
    margin-right: -1px;
    border-left: 1px solid #a5a9af;
}
.view {
    display: flex;
    align-items: center;
    justify-content: center;
    width: 18px;
    height: 18px;
}
.view.active {
    background: #fbdf7c;
    border: 1px solid #c39a35;
    border-radius: 2px;
}
.zoom-label {
    width: 50px;
    height: 20px;
    text-align: center;
}
.zoom-slider {
    appearance: none;
    width: 101px;
    height: 16px;
    margin: 0;
    background: linear-gradient(#85898f, #85898f) center / 100% 1px no-repeat;
}
.zoom-slider::-webkit-slider-thumb {
    appearance: none;
    width: 9px;
    height: 13px;
    border: 1px solid #6f7378;
    border-radius: 1px 1px 5px 5px;
    background: #f7f8f9;
}

/* 悬浮层 */
.credit {
    position: absolute;
    right: 15px;
    bottom: 8px;
    font-family: "Noto Sans CJK SC", sans-serif;
    font-size: 20px;
    line-height: 24px;
    color: #a9a9a9;
}
.ime {
    position: absolute;
    right: 0;
    bottom: 150px;
    display: flex;
    align-items: center;
    gap: 8px;
    height: 25px;
    background: #fff;
}
.ime-logo {
    margin: 0 -3px 0 -32px;
}
.clock {
    position: absolute;
    right: 122px;
    bottom: 75px;
    width: 50px;
    height: 50px;
    border: 3px solid #f0f8ff;
    border-radius: 50%;
    background: linear-gradient(#3d86f2 20%, #52a8fb 80%);
    color: #fff;
    font-size: 14px;
    line-height: 44px;
    text-align: center;
}
```
